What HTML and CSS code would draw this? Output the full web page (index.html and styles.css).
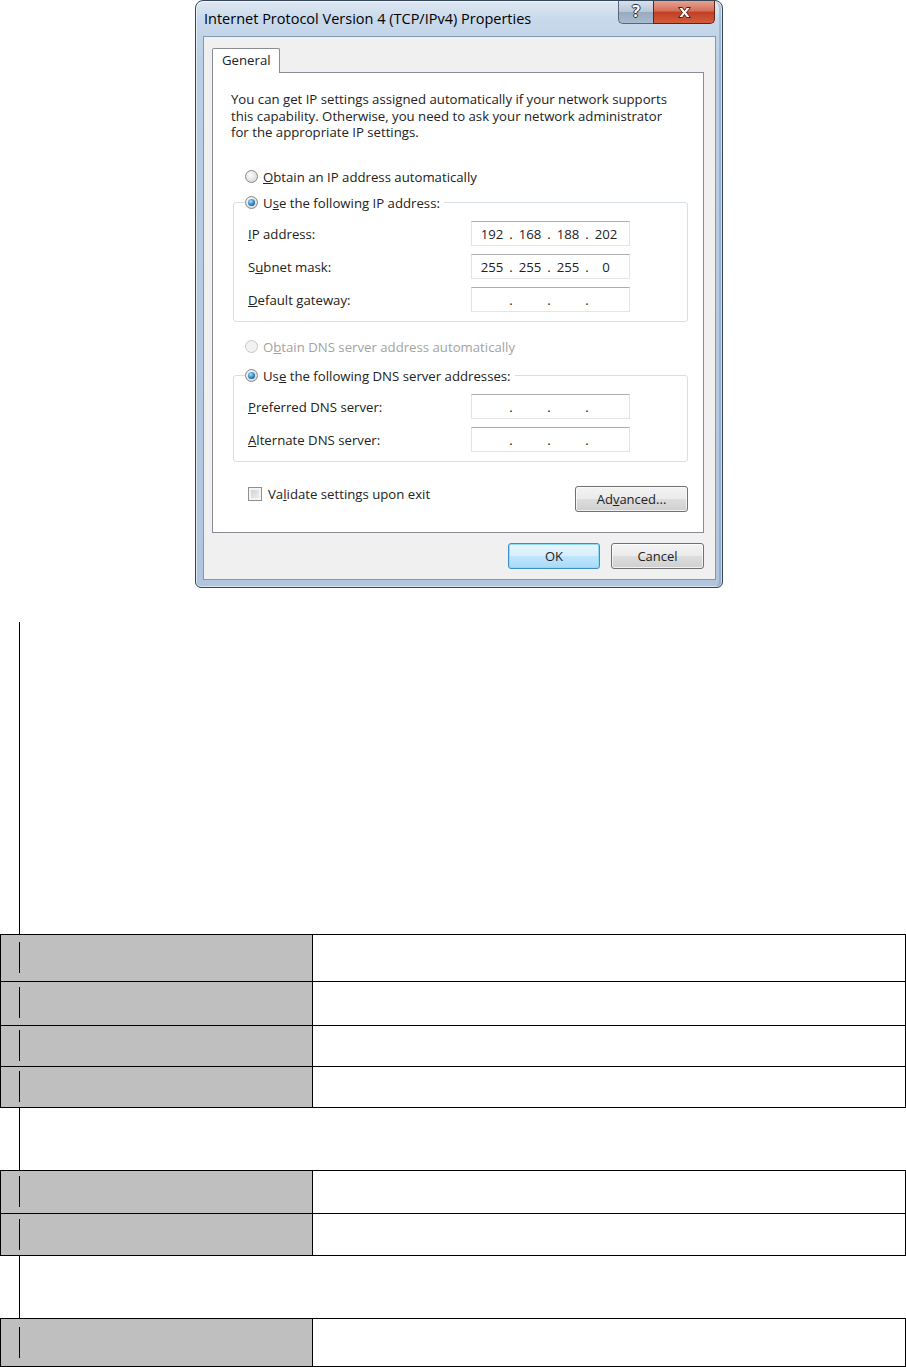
FILE: index.html
```html
<!DOCTYPE html>
<html lang="en">
<head>
    <meta charset="UTF-8">
    <meta name="viewport" content="width=device-width, initial-scale=1.0">
    <title>TCP/IPv4 Properties</title>
    <link rel="stylesheet" href="styles.css">
</head>
<body>
    <div class="window">
        <div class="titlebar">
            <span class="title">Internet Protocol Version 4 (TCP/IPv4) Properties</span>
            <div class="caption-btns">
                <span class="cap-help">?</span>
                <span class="cap-close">
                    <svg width="15" height="13" viewBox="0 0 15 13">
                        <path d="M1.5 1.5h4l2 3 2-3h4l-4 5 4 5h-4l-2-3-2 3h-4l4-5z" fill="#fff" stroke="#5a1d12" stroke-width="1" stroke-linejoin="round"/>
                    </svg>
                </span>
            </div>
        </div>

        <div class="client">
            <div class="tabs">
                <span class="tab">General</span>
            </div>
            <div class="tab-page">
                <p class="intro">You can get IP settings assigned automatically if your network supports<br>this capability. Otherwise, you need to ask your network administrator<br>for the appropriate IP settings.</p>

                <div class="radio-row option"><span class="radio"></span><span><u>O</u>btain an IP address automatically</span></div>
                <fieldset class="group">
                    <legend class="radio-row"><span class="radio on"></span><span>U<u>s</u>e the following IP address:</span></legend>
                    <div class="field">
                        <span class="field-label"><u>I</u>P address:</span>
                        <span class="ipbox"><span class="oct">192</span><span class="dot">.</span><span class="oct">168</span><span class="dot">.</span><span class="oct">188</span><span class="dot">.</span><span class="oct">202</span></span>
                    </div>
                    <div class="field">
                        <span class="field-label">S<u>u</u>bnet mask:</span>
                        <span class="ipbox"><span class="oct">255</span><span class="dot">.</span><span class="oct">255</span><span class="dot">.</span><span class="oct">255</span><span class="dot">.</span><span class="oct">0</span></span>
                    </div>
                    <div class="field">
                        <span class="field-label"><u>D</u>efault gateway:</span>
                        <span class="ipbox"><span class="oct"></span><span class="dot">.</span><span class="oct"></span><span class="dot">.</span><span class="oct"></span><span class="dot">.</span><span class="oct"></span></span>
                    </div>
                </fieldset>

                <div class="radio-row dns-auto disabled"><span class="radio dim"></span><span>O<u>b</u>tain DNS server address automatically</span></div>
                <fieldset class="group dns">
                    <legend class="radio-row"><span class="radio on"></span><span>Us<u>e</u> the following DNS server addresses:</span></legend>
                    <div class="field">
                        <span class="field-label"><u>P</u>referred DNS server:</span>
                        <span class="ipbox"><span class="oct"></span><span class="dot">.</span><span class="oct"></span><span class="dot">.</span><span class="oct"></span><span class="dot">.</span><span class="oct"></span></span>
                    </div>
                    <div class="field">
                        <span class="field-label"><u>A</u>lternate DNS server:</span>
                        <span class="ipbox"><span class="oct"></span><span class="dot">.</span><span class="oct"></span><span class="dot">.</span><span class="oct"></span><span class="dot">.</span><span class="oct"></span></span>
                    </div>
                </fieldset>

                <div class="bottom-row">
                    <label class="check-row"><span class="check"></span><span>Va<u>l</u>idate settings upon exit</span></label>
                    <button class="btn advanced">Ad<u>v</u>anced...</button>
                </div>
            </div>

            <div class="dlg-buttons">
                <button class="btn default ok">OK</button>
                <button class="btn cancel">Cancel</button>
            </div>
        </div>
    </div>

    <div class="doc">
        <table class="spec">
            <colgroup><col class="key-col"><col></colgroup>
            <tr class="h47"><td class="key"><span class="mark"></span></td><td></td></tr>
            <tr class="h44"><td class="key"><span class="mark"></span></td><td></td></tr>
            <tr class="h41"><td class="key"><span class="mark"></span></td><td></td></tr>
            <tr class="h41"><td class="key"><span class="mark"></span></td><td></td></tr>
        </table>

        <table class="spec">
            <colgroup><col class="key-col"><col></colgroup>
            <tr class="h43"><td class="key"><span class="mark"></span></td><td></td></tr>
            <tr class="h42"><td class="key"><span class="mark"></span></td><td></td></tr>
        </table>

        <table class="spec">
            <colgroup><col class="key-col"><col></colgroup>
            <tr class="h48"><td class="key"><span class="mark"></span></td><td></td></tr>
        </table>
    </div>
</body>
</html>
```

FILE: styles.css
```css
body {
    margin: 0;
    background: #fff;
    font-family: "Open Sans", "Noto Sans", sans-serif;
    color: #222;
}

/* dialog window */
.window {
    width: 528px;
    height: 588px;
    box-sizing: border-box;
    margin-left: 195px;
    border: 1px solid #34465a;
    border-radius: 8px 8px 6px 6px;
    background: linear-gradient(180deg, #dfe8f3 0px, #c9d9eb 18px, #bacee5 60px, #b1c6de 100%);
    box-shadow: inset 0 0 0 1px rgba(255, 255, 255, 0.55), inset -3px 0 0 rgba(70, 100, 135, 0.25);
    display: flex;
    flex-direction: column;
}
.titlebar {
    display: flex;
    height: 35px;
    flex-shrink: 0;
}
.title {
    padding: 8px 0 0 8px;
    font-size: 14.5px;
    line-height: 19px;
    color: #000;
}
.caption-btns {
    display: flex;
    margin-left: auto;
    margin-right: 7px;
    height: 23px;
}
.cap-help {
    width: 35px;
    box-sizing: border-box;
    border: 1px solid #56677b;
    border-top: 0;
    border-right: 0;
    border-radius: 0 0 0 5px;
    background: linear-gradient(180deg, #d8e0ea, #b9c6d5 48%, #98aabf 52%, #a9bbd0);
    color: #fff;
    font-weight: bold;
    font-size: 16px;
    line-height: 21px;
    text-align: center;
    text-shadow: 1px 0 0 #1f2d3d, -1px 0 0 #1f2d3d, 0 1px 0 #1f2d3d, 0 -1px 0 #1f2d3d;
}
.cap-close {
    width: 62px;
    box-sizing: border-box;
    border: 1px solid #5e2418;
    border-top: 0;
    border-radius: 0 0 5px 0;
    background: linear-gradient(180deg, #e8a292, #d46f56 45%, #c23f26 52%, #d25d3b);
    display: flex;
    align-items: center;
    justify-content: center;
}

.client {
    flex: 1;
    margin: 0 6px 7px 7px;
    border: 1px solid #8397ae;
    background: #f0f0f0;
    padding: 11px 11px 10px 8px;
    display: flex;
    flex-direction: column;
    font-size: 13.2px;
    line-height: 16px;
}

.tabs {
    display: flex;
    height: 24px;
}
.tab {
    position: relative;
    z-index: 1;
    width: 68px;
    height: 25px;
    box-sizing: border-box;
    padding: 3px 0 0 9px;
    border: 1px solid #898c95;
    border-bottom: 0;
    border-radius: 2px 2px 0 0;
    background: #fff;
}
.tab-page {
    height: 461px;
    box-sizing: border-box;
    border: 1px solid #898c95;
    background: #fff;
    padding: 18px 14px 0 18px;
}
.intro {
    margin: 0;
    line-height: 16.5px;
}

.radio-row {
    display: flex;
    align-items: center;
    gap: 5px;
    height: 16px;
    padding-left: 14px;
}
.option {
    margin-top: 28px;
}
.dns-auto {
    margin-top: 17px;
}
.disabled {
    color: #a3a3a3;
}
.radio {
    width: 13px;
    height: 13px;
    box-sizing: border-box;
    border-radius: 50%;
    border: 1px solid #8a8a8a;
    background: radial-gradient(circle at 40% 35%, #fdfdfd, #dcdcdc 70%, #cacaca);
    flex: none;
    display: flex;
    align-items: center;
    justify-content: center;
}
.radio.on::after {
    content: "";
    width: 7px;
    height: 7px;
    border-radius: 50%;
    background: radial-gradient(circle at 40% 35%, #a6e3ff, #2b80c4 55%, #0b3f73);
}
.radio.dim {
    border-color: #c6c6c6;
    background: #f2f2f2;
}

.group {
    margin: 10px 0 0 2px;
    width: 455px;
    min-width: 0;
    box-sizing: border-box;
    border: 1px solid #d5dfe5;
    border-radius: 3px;
    padding: 11px 14px 9px;
}
.group.dns {
    margin-top: 13px;
}
.group legend {
    padding: 0 4px 0 0;
    margin-left: -3px;
}
.field {
    display: flex;
    align-items: center;
    height: 24px;
}
.field + .field {
    margin-top: 9px;
}
.field-label {
    width: 223px;
}
.ipbox {
    display: flex;
    align-items: center;
    width: 159px;
    height: 25px;
    box-sizing: border-box;
    padding-left: 5px;
    border: 1px solid #e0e5ea;
    border-top-color: #abadb3;
    background: #fff;
}
.oct {
    width: 30px;
    text-align: center;
}
.dot {
    width: 8px;
    text-align: center;
}

.bottom-row {
    display: flex;
    justify-content: space-between;
    align-items: flex-start;
    margin: 24px 1px 0 0;
    padding-left: 17px;
}
.check-row {
    display: flex;
    align-items: center;
    gap: 6px;
}
.check {
    width: 14px;
    height: 14px;
    box-sizing: border-box;
    border: 1px solid #8e8f8f;
    background: linear-gradient(135deg, #c9cdd2, #f3f3f3);
    box-shadow: inset 0 0 0 2px #f4f4f4;
}

.btn {
    height: 26px;
    padding: 0;
    border: 1px solid #707070;
    border-radius: 3px;
    background: linear-gradient(180deg, #f3f3f3, #ebebeb 48%, #dddddd 52%, #cfcfcf);
    box-shadow: inset 0 0 0 1px rgba(255, 255, 255, 0.7);
    font-family: inherit;
    font-size: 13px;
    color: #222;
}
.advanced {
    width: 113px;
}
.dlg-buttons {
    display: flex;
    justify-content: flex-end;
    gap: 11px;
    margin-top: 10px;
}
.ok {
    width: 92px;
}
.cancel {
    width: 93px;
}
.default {
    border-color: #3c8fc2;
    background: linear-gradient(180deg, #e7f5fd, #d8effc 48%, #bee6fd 52%, #a9daf5);
    box-shadow: inset 0 0 0 1px #8fdbf8;
}

/* document body below the screenshot */
.doc {
    margin: 34px 0 0 19px;
    border-left: 1px solid #000;
    padding-top: 312px;
}
.spec {
    margin-left: -20px;
    width: 906px;
    border-collapse: collapse;
    table-layout: fixed;
}
.spec + .spec {
    margin-top: 62px;
}
.key-col {
    width: 312px;
}
.spec td {
    border: 1px solid #000;
    padding: 4px 0 5px 18px;
    vertical-align: top;
    background: #fff;
}
.spec td.key {
    background: #bfbfbf;
}
.mark {
    display: block;
    width: 0;
    height: 31px;
    border-left: 1px solid #000;
}
.h47 td { padding-top: 7px; padding-bottom: 8px; }
.h44 td { padding-top: 5px; padding-bottom: 7px; }
.h43 td { padding-top: 5px; padding-bottom: 6px; }
.h42 td { padding-top: 5px; padding-bottom: 5px; }
.h48 td { padding-top: 8px; padding-bottom: 8px; }
```
